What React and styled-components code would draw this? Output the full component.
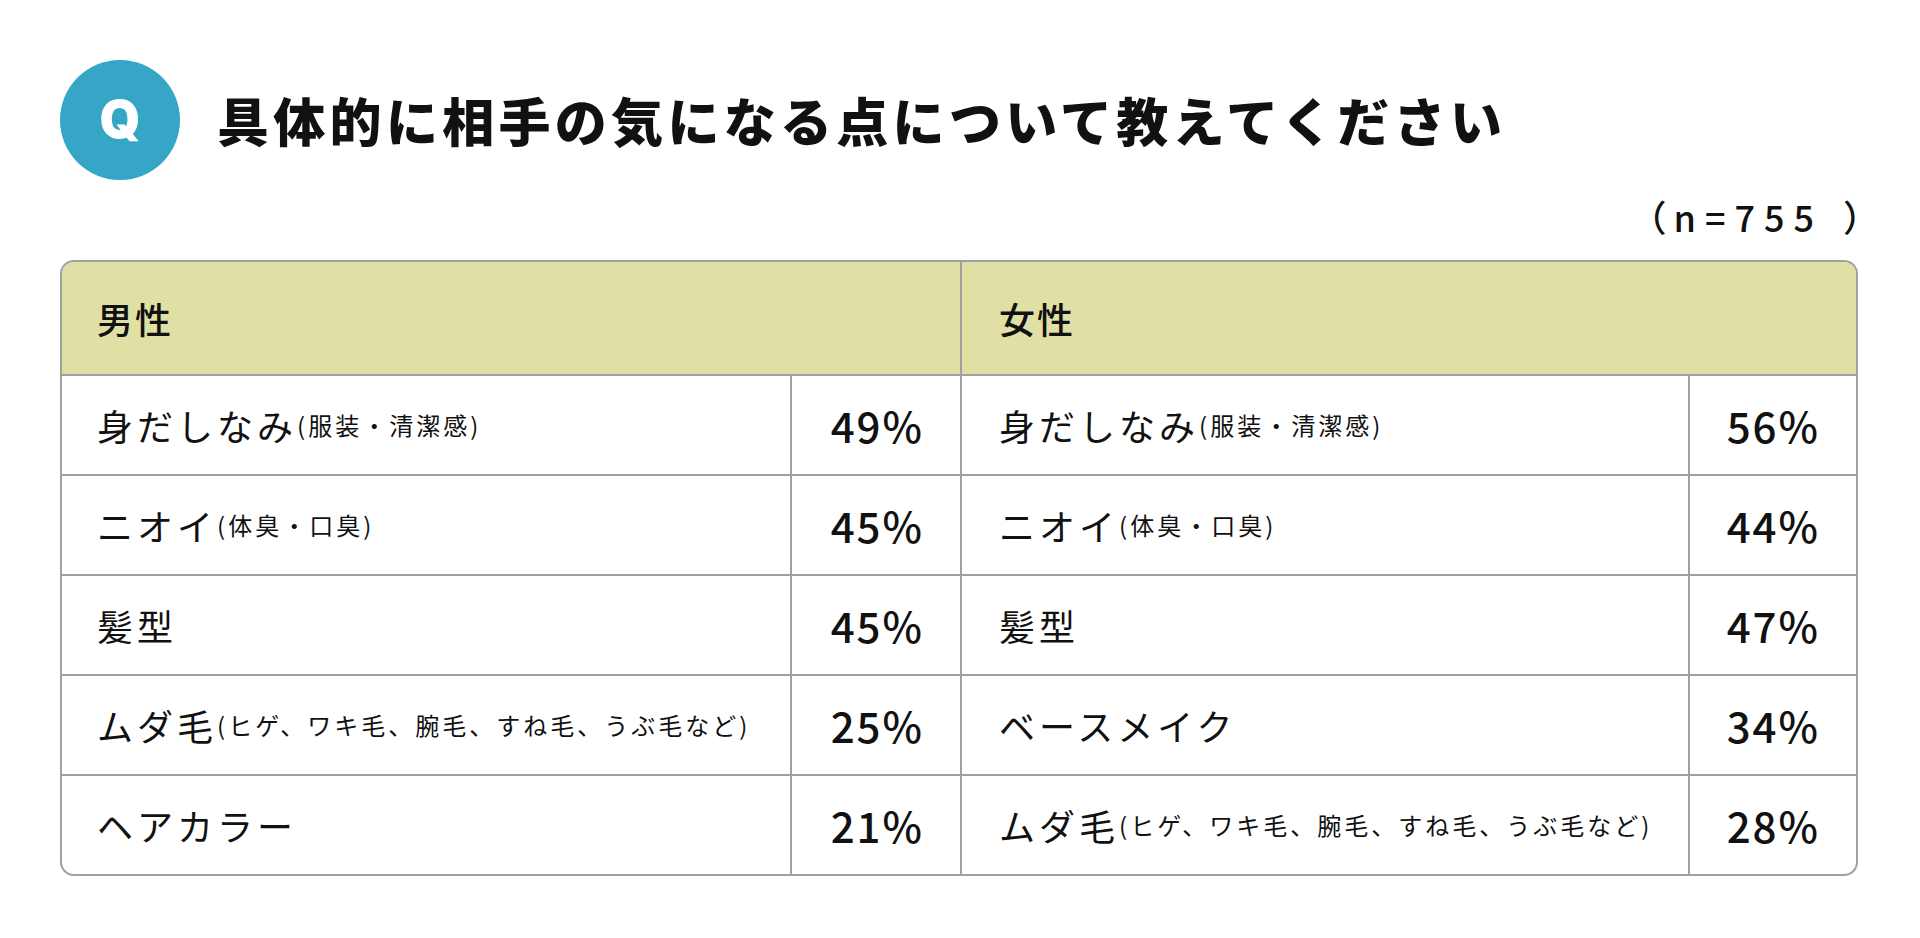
import React from "react";
import styled, { createGlobalStyle } from "styled-components";

const GlobalStyle = createGlobalStyle`
  html, body {
    margin: 0;
    padding: 0;
    background: #ffffff;
  }
  body {
    font-family: "Noto Sans CJK JP", "Noto Sans", sans-serif;
    color: #111111;
  }
  * { box-sizing: border-box; }
`;

const Page = styled.main`
  padding: 60px 62px 40px 60px;
`;

const TitleRow = styled.header`
  display: flex;
  align-items: center;
  gap: 37px;
`;

const QBadge = styled.div`
  width: 120px;
  height: 120px;
  flex: none;
  border-radius: 50%;
  background: #36a6c6;
  color: #ffffff;
  display: flex;
  align-items: center;
  justify-content: center;
  font-family: Inter, "Liberation Sans", sans-serif;
  font-weight: 900;
  font-size: 52px;
  line-height: 1;
`;

const Title = styled.h1`
  margin: 0;
  font-size: 52px;
  font-weight: 900;
  letter-spacing: 4.3px;
  line-height: 1;
  color: #111111;
`;

const Sample = styled.p`
  margin: 16px -21px 0 0;
  display: flex;
  justify-content: flex-end;
  align-items: center;
  font-size: 36px;
  font-weight: 500;
  line-height: 40px;
  color: #111111;
`;

const Count = styled.span`
  letter-spacing: 9px;
  margin: 0 20px 0 7px;
`;

const Table = styled.section`
  margin-top: 24px;
  display: grid;
  grid-template-columns: 1fr 170px 1fr 168px;
  border: 2px solid #a0a0a0;
  border-radius: 14px;
  overflow: hidden;
`;

const HeadCell = styled.div`
  grid-column: span 2;
  height: 112px;
  background: #e0e0a5;
  display: flex;
  align-items: center;
  padding-left: ${(p) => (p.$divider ? "37px" : "35px")};
  border-left: ${(p) => (p.$divider ? "2px solid #a0a0a0" : "none")};
  font-size: 36px;
  font-weight: 500;
  letter-spacing: 2px;
  line-height: 1;
`;

const LabelCell = styled.div`
  height: 100px;
  border-top: 2px solid #a0a0a0;
  border-left: ${(p) => (p.$divider ? "2px solid #a0a0a0" : "none")};
  display: flex;
  align-items: center;
  padding-left: ${(p) => (p.$divider ? "37px" : "35px")};
  white-space: nowrap;
  line-height: 1;
`;

const Main = styled.span`
  font-size: 36px;
  font-weight: 400;
  letter-spacing: 4px;
`;

const Sub = styled.span`
  font-size: 24px;
  font-weight: 400;
  letter-spacing: 3px;
`;

const ValueCell = styled.div`
  height: 100px;
  border-top: 2px solid #a0a0a0;
  border-left: 2px solid #a0a0a0;
  display: flex;
  align-items: center;
  justify-content: flex-end;
  padding-right: 36px;
  font-size: 42px;
  font-weight: 500;
  letter-spacing: 2px;
  line-height: 1;
`;

const rows = [
  {
    male: { main: "身だしなみ", sub: "(服装・清潔感)" },
    maleValue: "49%",
    female: { main: "身だしなみ", sub: "(服装・清潔感)" },
    femaleValue: "56%",
  },
  {
    male: { main: "ニオイ", sub: "(体臭・口臭)" },
    maleValue: "45%",
    female: { main: "ニオイ", sub: "(体臭・口臭)" },
    femaleValue: "44%",
  },
  {
    male: { main: "髪型" },
    maleValue: "45%",
    female: { main: "髪型" },
    femaleValue: "47%",
  },
  {
    male: { main: "ムダ毛", sub: "(ヒゲ、ワキ毛、腕毛、すね毛、うぶ毛など)" },
    maleValue: "25%",
    female: { main: "ベースメイク" },
    femaleValue: "34%",
  },
  {
    male: { main: "ヘアカラー" },
    maleValue: "21%",
    female: { main: "ムダ毛", sub: "(ヒゲ、ワキ毛、腕毛、すね毛、うぶ毛など)" },
    femaleValue: "28%",
  },
];

function Label({ item, divider }) {
  return (
    <LabelCell $divider={divider}>
      <Main>{item.main}</Main>
      {item.sub && <Sub>{item.sub}</Sub>}
    </LabelCell>
  );
}

export default function App() {
  return (
    <>
      <GlobalStyle />
      <Page>
        <TitleRow>
          <QBadge>Q</QBadge>
          <Title>具体的に相手の気になる点について教えてください</Title>
        </TitleRow>
        <Sample>
          <span>（</span>
          <Count>n=755</Count>
          <span>）</span>
        </Sample>
        <Table>
          <HeadCell>男性</HeadCell>
          <HeadCell $divider>女性</HeadCell>
          {rows.map((r, i) => (
            <React.Fragment key={i}>
              <Label item={r.male} />
              <ValueCell>{r.maleValue}</ValueCell>
              <Label item={r.female} divider />
              <ValueCell>{r.femaleValue}</ValueCell>
            </React.Fragment>
          ))}
        </Table>
      </Page>
    </>
  );
}
